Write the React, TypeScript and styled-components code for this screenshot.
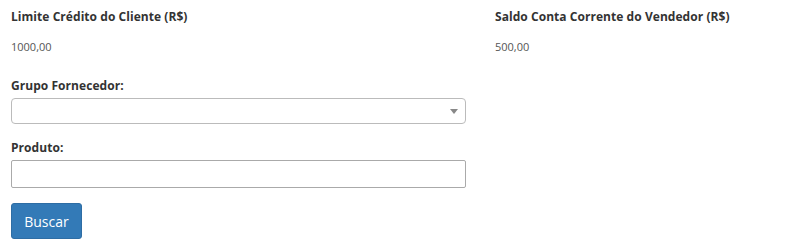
import styled, { createGlobalStyle } from "styled-components";

const GlobalStyle = createGlobalStyle`
  body {
    margin: 0;
    background: #ffffff;
    font-family: "Open Sans", "DejaVu Sans", sans-serif;
    color: #333333;
  }
`;

const Page = styled.div`
  padding: 9px 11px 0 11px;
`;

const InfoRow = styled.div`
  display: grid;
  grid-template-columns: 484px 1fr;
`;

const InfoBlock = styled.div`
  display: flex;
  flex-direction: column;
`;

const Label = styled.label`
  display: block;
  font-size: 12px;
  font-weight: 700;
  line-height: 16px;
  letter-spacing: 0.05px;
  color: #333333;
`;

const Value = styled.span`
  margin-top: 14px;
  font-size: 11px;
  line-height: 16px;
  color: #555555;
`;

const Field = styled.div`
  width: 455px;
  margin-top: 23px;
  display: flex;
  flex-direction: column;
  row-gap: 4px;
  & + & {
    margin-top: 16px;
  }
`;

const SelectBox = styled.div`
  position: relative;
  height: 26px;
  box-sizing: border-box;
  border: 1px solid #bbbbbb;
  border-radius: 4px;
  background: #ffffff;
`;

const Caret = styled.span`
  position: absolute;
  right: 7px;
  top: 10px;
  width: 0;
  height: 0;
  border-left: 4px solid transparent;
  border-right: 4px solid transparent;
  border-top: 5px solid #888888;
`;

const TextInput = styled.input`
  height: 28px;
  box-sizing: border-box;
  border: 1px solid #aaaaaa;
  border-radius: 2px;
  padding: 0 6px;
  font-family: inherit;
  font-size: 12px;
  outline: none;
`;

const Button = styled.button`
  margin-top: 15px;
  width: 71px;
  height: 36px;
  border: 1px solid #2e6da4;
  border-radius: 3px;
  background: #337ab7;
  color: #ffffff;
  font-family: inherit;
  font-size: 14px;
  cursor: pointer;
`;

export default function App() {
  return (
    <>
      <GlobalStyle />
      <Page>
        <InfoRow>
          <InfoBlock>
            <Label>Limite Crédito do Cliente (R$)</Label>
            <Value>1000,00</Value>
          </InfoBlock>
          <InfoBlock>
            <Label>Saldo Conta Corrente do Vendedor (R$)</Label>
            <Value>500,00</Value>
          </InfoBlock>
        </InfoRow>
        <Field>
          <Label>Grupo Fornecedor:</Label>
          <SelectBox>
            <Caret />
          </SelectBox>
        </Field>
        <Field>
          <Label>Produto:</Label>
          <TextInput type="text" />
        </Field>
        <Button type="button">Buscar</Button>
      </Page>
    </>
  );
}
